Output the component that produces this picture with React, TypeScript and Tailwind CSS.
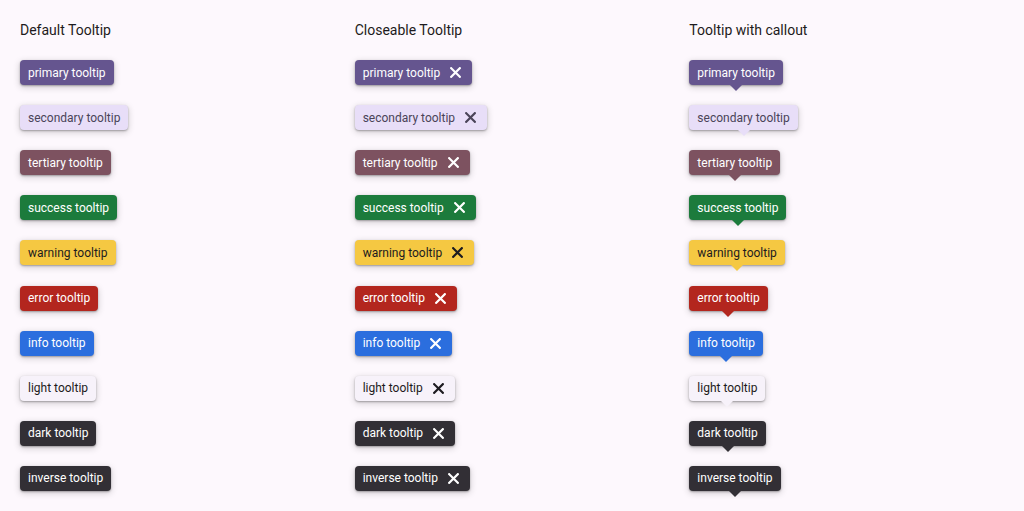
import React from "react";

type V = { name: string; bg: string; fg: string; arrow: string };

const variants: V[] = [
  { name: "primary", bg: "bg-[#65558f]", fg: "text-white", arrow: "border-t-[#65558f]" },
  { name: "secondary", bg: "bg-[#e8def8]", fg: "text-[#4a4458]", arrow: "border-t-[#e8def8]" },
  { name: "tertiary", bg: "bg-[#7d5260]", fg: "text-white", arrow: "border-t-[#7d5260]" },
  { name: "success", bg: "bg-[#1c7b3c]", fg: "text-white", arrow: "border-t-[#1c7b3c]" },
  { name: "warning", bg: "bg-[#f5c842]", fg: "text-[#1d1b20]", arrow: "border-t-[#f5c842]" },
  { name: "error", bg: "bg-[#b3261e]", fg: "text-white", arrow: "border-t-[#b3261e]" },
  { name: "info", bg: "bg-[#2b6ede]", fg: "text-white", arrow: "border-t-[#2b6ede]" },
  { name: "light", bg: "bg-[#f7f2fa]", fg: "text-[#1d1b20]", arrow: "border-t-[#f7f2fa]" },
  { name: "dark", bg: "bg-[#322f35]", fg: "text-white", arrow: "border-t-[#322f35]" },
  { name: "inverse", bg: "bg-[#322f35]", fg: "text-white", arrow: "border-t-[#322f35]" },
];

const shadow = "shadow-[0_1px_2px_rgba(0,0,0,0.3),0_2px_6px_1px_rgba(0,0,0,0.15)]";

function X() {
  return (
    <svg width="11" height="11" viewBox="0 0 11 11" className="ml-[10px] block">
      <path d="M1.2 1.2 L9.8 9.8 M9.8 1.2 L1.2 9.8" stroke="currentColor" strokeWidth="2.2" strokeLinecap="square" />
    </svg>
  );
}

function Tip({ v, mode }: { v: V; mode: "default" | "close" | "callout" }) {
  return (
    <div className="relative flex h-[25px] w-fit">
      <div
        className={`flex h-[25px] items-center rounded-[4px] pl-[8px] ${mode === "close" ? "pr-[11px]" : "pr-[8px]"} text-[12px] leading-[16px] ${v.bg} ${v.fg} ${shadow}`}
      >
        <span>{v.name} tooltip</span>
        {mode === "close" && <X />}
      </div>
      {mode === "callout" && (
        <div
          className={`absolute left-1/2 top-[25px] h-0 w-0 -translate-x-1/2 border-x-[6px] border-t-[6px] border-x-transparent ${v.arrow}`}
        />
      )}
    </div>
  );
}

function Column({ title, mode }: { title: string; mode: "default" | "close" | "callout" }) {
  return (
    <div className="flex w-[335px] flex-col">
      <div className="h-[20px] text-[14px] leading-[20px] text-[#1d1b20]">{title}</div>
      <div className="mt-[20px] flex flex-col gap-[20.12px]">
        {variants.map((v) => (
          <Tip key={v.name} v={v} mode={mode} />
        ))}
      </div>
    </div>
  );
}

export default function App() {
  return (
    <div
      className="flex h-[511px] w-[1024px] bg-[#fdf8fd] pl-[20px] pt-[20px]"
      style={{ fontFamily: "Roboto, 'Noto Sans', sans-serif" }}
    >
      <Column title="Default Tooltip" mode="default" />
      <Column title="Closeable Tooltip" mode="close" />
      <Column title="Tooltip with callout" mode="callout" />
    </div>
  );
}
